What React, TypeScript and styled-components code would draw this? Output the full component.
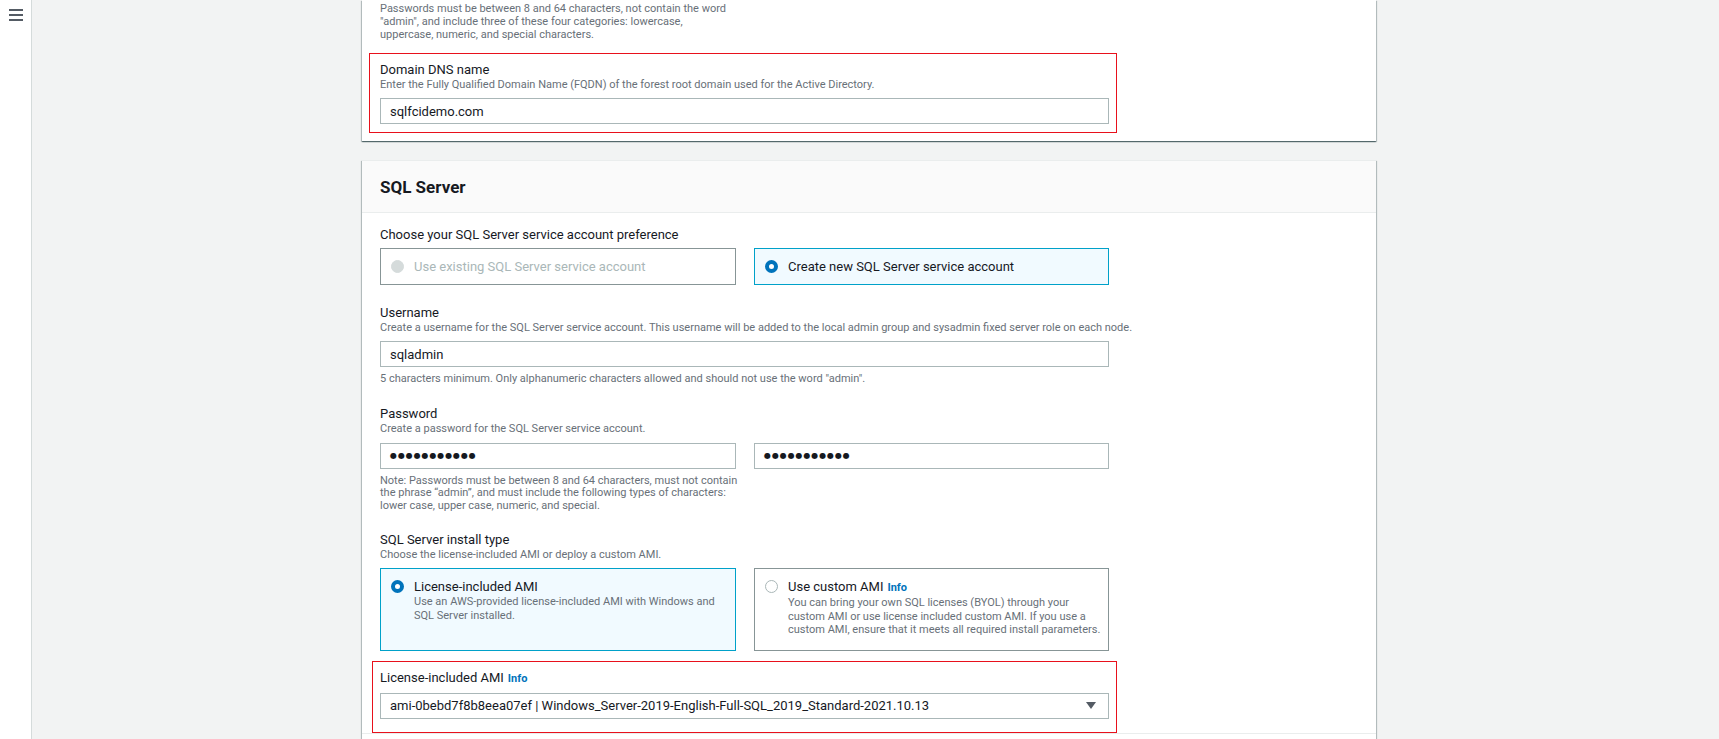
import React from "react";
import styled, { createGlobalStyle } from "styled-components";

const GlobalStyle = createGlobalStyle`
  html, body {
    margin: 0;
    padding: 0;
  }
  body {
    background: #f2f3f3;
    font-family: Roboto, "Liberation Sans", sans-serif;
    color: #16191f;
    overflow: hidden;
  }
`;

const Shell = styled.div`
  display: flex;
  height: 739px;
  overflow: hidden;
`;

const SideRail = styled.aside`
  flex: none;
  width: 32px;
  background: #fff;
  border-right: 1px solid #d5dbdb;
  display: flex;
  justify-content: center;
  align-items: flex-start;
  padding-top: 9px;
  box-sizing: border-box;
`;

const Main = styled.main`
  flex: 1;
  padding-left: 330px;
  display: flex;
  flex-direction: column;
  gap: 19px;
`;

const Card = styled.section`
  box-sizing: border-box;
  width: 1014px;
  background: #fff;
  box-shadow: 0 1px 1px 0 rgba(0, 28, 36, 0.45),
    1px 1px 1px 0 rgba(0, 28, 36, 0.2), -1px 1px 1px 0 rgba(0, 28, 36, 0.2);
`;

const TopCard = styled(Card)`
  padding: 2px 18px 8px;
`;

const CardHeader = styled.header`
  height: 51px;
  display: flex;
  align-items: center;
  padding: 0 18px;
  background: #fafafa;
  border-top: 1px solid #eaeded;
  border-bottom: 1px solid #eaeded;
  font-size: 17px;
  font-weight: 700;
`;

const CardBody = styled.div`
  padding: 13px 18px 0;
`;

const CardFooter = styled.div`
  height: 24px;
  border-top: 1px solid #eaeded;
`;

const FieldGroup = styled.div<{ $gap?: number }>`
  margin-top: ${(p) => p.$gap ?? 19}px;
`;

const Highlight = styled.div<{ $left: number; $top: number; $bottom: number }>`
  box-sizing: border-box;
  width: ${(p) => 1117 - 380 + p.$left}px;
  margin-left: -${(p) => p.$left}px;
  margin-top: ${(p) => p.$top}px;
  padding: 7px 7px ${(p) => p.$bottom}px ${(p) => p.$left - 1}px;
  border: 1px solid #e8111c;
`;

const Label = styled.div`
  font-size: 13px;
  line-height: 17px;
  color: #16191f;
`;

const Description = styled.div`
  font-size: 11px;
  line-height: 14px;
  color: #687078;
  white-space: nowrap;
`;

const Hint = styled.div`
  margin-top: 6px;
  font-size: 11px;
  line-height: 12.5px;
  color: #687078;
  white-space: nowrap;
`;

const Notice = styled(Hint)`
  margin-top: 0;
  line-height: 13px;
`;

const InfoLink = styled.a`
  margin-left: 4px;
  font-size: 11px;
  font-weight: 700;
  color: #0073bb;
  text-decoration: none;
`;

const Input = styled.div`
  box-sizing: border-box;
  width: 729px;
  height: 26px;
  margin-top: 6px;
  padding: 0 9px;
  display: flex;
  align-items: center;
  border: 1px solid #aab7b8;
  background: #fff;
  font-size: 13px;
  color: #16191f;
  white-space: nowrap;
`;

const PasswordInput = styled(Input)`
  width: auto;
  margin-top: 0;
`;

const Dots = styled.span`
  font-family: "DejaVu Sans", sans-serif;
  font-size: 8px;
  letter-spacing: 0.9px;
`;

const SelectBox = styled(Input)`
  justify-content: space-between;
  padding-right: 12px;
`;

const TwoCols = styled.div<{ $top?: number }>`
  display: grid;
  width: 729px;
  grid-template-columns: 356px 355px;
  column-gap: 18px;
  margin-top: ${(p) => p.$top ?? 6}px;
`;

const Tile = styled.div<{ $selected?: boolean; $disabled?: boolean }>`
  box-sizing: border-box;
  display: flex;
  align-items: flex-start;
  gap: 10px;
  padding: 9px 10px 13px;
  border: 1px solid ${(p) => (p.$selected ? "#00a1c9" : "#879596")};
  background: ${(p) => (p.$selected ? "#f1faff" : "#fff")};
  color: ${(p) => (p.$disabled ? "#aab7b8" : "#16191f")};
`;

const ChoiceTile = styled(Tile)`
  height: 37px;
  align-items: center;
  padding: 0 10px;
`;

const Radio = styled.span<{ $state: "on" | "off" | "disabled" }>`
  flex: none;
  box-sizing: border-box;
  width: 13px;
  height: 13px;
  border-radius: 50%;
  border: ${(p) =>
    p.$state === "on"
      ? "4px solid #0073bb"
      : p.$state === "off"
      ? "1px solid #aab7b8"
      : "1px solid #d5dbdb"};
  background: ${(p) => (p.$state === "disabled" ? "#d5dbdb" : "#fff")};
`;

const TileRadio = styled(Radio)`
  margin-top: 2px;
`;

const TileText = styled.div`
  display: flex;
  flex-direction: column;
`;

const TileTitle = styled.div`
  font-size: 13px;
  line-height: 17px;
`;

const TileDesc = styled.div`
  font-size: 11px;
  line-height: 13.5px;
  color: #687078;
  white-space: nowrap;
`;

const ChoiceText = styled.span`
  font-size: 13px;
`;

const MenuIcon = () => (
  <svg width="14" height="12" viewBox="0 0 14 12">
    <g stroke="#545b64" strokeWidth="2">
      <line x1="0" y1="1" x2="14" y2="1" />
      <line x1="0" y1="6" x2="14" y2="6" />
      <line x1="0" y1="11" x2="14" y2="11" />
    </g>
  </svg>
);

const Caret = () => (
  <svg width="10" height="7" viewBox="0 0 10 7">
    <polygon points="0,0 10,0 5,7" fill="#545b64" />
  </svg>
);

const App: React.FC = () => {
  return (
    <>
      <GlobalStyle />
      <Shell>
        <SideRail>
          <MenuIcon />
        </SideRail>
        <Main>
          <TopCard>
            <Notice>
              Passwords must be between 8 and 64 characters, not contain the word
              <br />
              "admin", and include three of these four categories: lowercase,
              <br />
              uppercase, numeric, and special characters.
            </Notice>
            <Highlight $left={11} $top={12} $bottom={8}>
              <Label>Domain DNS name</Label>
              <Description>
                Enter the Fully Qualified Domain Name (FQDN) of the forest root
                domain used for the Active Directory.
              </Description>
              <Input>sqlfcidemo.com</Input>
            </Highlight>
          </TopCard>

          <Card>
            <CardHeader>SQL Server</CardHeader>
            <CardBody>
              <FieldGroup $gap={0}>
                <Label>Choose your SQL Server service account preference</Label>
                <TwoCols $top={5}>
                  <ChoiceTile $disabled>
                    <Radio $state="disabled" />
                    <ChoiceText>Use existing SQL Server service account</ChoiceText>
                  </ChoiceTile>
                  <ChoiceTile $selected>
                    <Radio $state="on" />
                    <ChoiceText>Create new SQL Server service account</ChoiceText>
                  </ChoiceTile>
                </TwoCols>
              </FieldGroup>

              <FieldGroup>
                <Label>Username</Label>
                <Description>
                  Create a username for the SQL Server service account. This
                  username will be added to the local admin group and sysadmin
                  fixed server role on each node.
                </Description>
                <Input>sqladmin</Input>
                <Hint>
                  5 characters minimum. Only alphanumeric characters allowed and
                  should not use the word "admin".
                </Hint>
              </FieldGroup>

              <FieldGroup>
                <Label>Password</Label>
                <Description>
                  Create a password for the SQL Server service account.
                </Description>
                <TwoCols $top={7}>
                  <PasswordInput>
                    <Dots>●●●●●●●●●●●</Dots>
                  </PasswordInput>
                  <PasswordInput>
                    <Dots>●●●●●●●●●●●</Dots>
                  </PasswordInput>
                </TwoCols>
                <Hint>
                  Note: Passwords must be between 8 and 64 characters, must not
                  contain
                  <br />
                  the phrase “admin”, and must include the following types of
                  characters:
                  <br />
                  lower case, upper case, numeric, and special.
                </Hint>
              </FieldGroup>

              <FieldGroup>
                <Label>SQL Server install type</Label>
                <Description>
                  Choose the license-included AMI or deploy a custom AMI.
                </Description>
                <TwoCols $top={6}>
                  <Tile $selected>
                    <TileRadio $state="on" />
                    <TileText>
                      <TileTitle>License-included AMI</TileTitle>
                      <TileDesc>
                        Use an AWS-provided license-included AMI with Windows and
                        <br />
                        SQL Server installed.
                      </TileDesc>
                    </TileText>
                  </Tile>
                  <Tile>
                    <TileRadio $state="off" />
                    <TileText>
                      <TileTitle>
                        Use custom AMI<InfoLink>Info</InfoLink>
                      </TileTitle>
                      <TileDesc>
                        You can bring your own SQL licenses (BYOL) through your
                        <br />
                        custom AMI or use license included custom AMI. If you use a
                        <br />
                        custom AMI, ensure that it meets all required install
                        parameters.
                      </TileDesc>
                    </TileText>
                  </Tile>
                </TwoCols>
              </FieldGroup>

              <Highlight $left={8} $top={10} $bottom={13}>
                <Label>
                  License-included AMI<InfoLink>Info</InfoLink>
                </Label>
                <SelectBox>
                  <span>
                    ami-0bebd7f8b8eea07ef | Windows_Server-2019-English-Full-SQL_2019_Standard-2021.10.13
                  </span>
                  <Caret />
                </SelectBox>
              </Highlight>
            </CardBody>
            <CardFooter />
          </Card>
        </Main>
      </Shell>
    </>
  );
};

export default App;
